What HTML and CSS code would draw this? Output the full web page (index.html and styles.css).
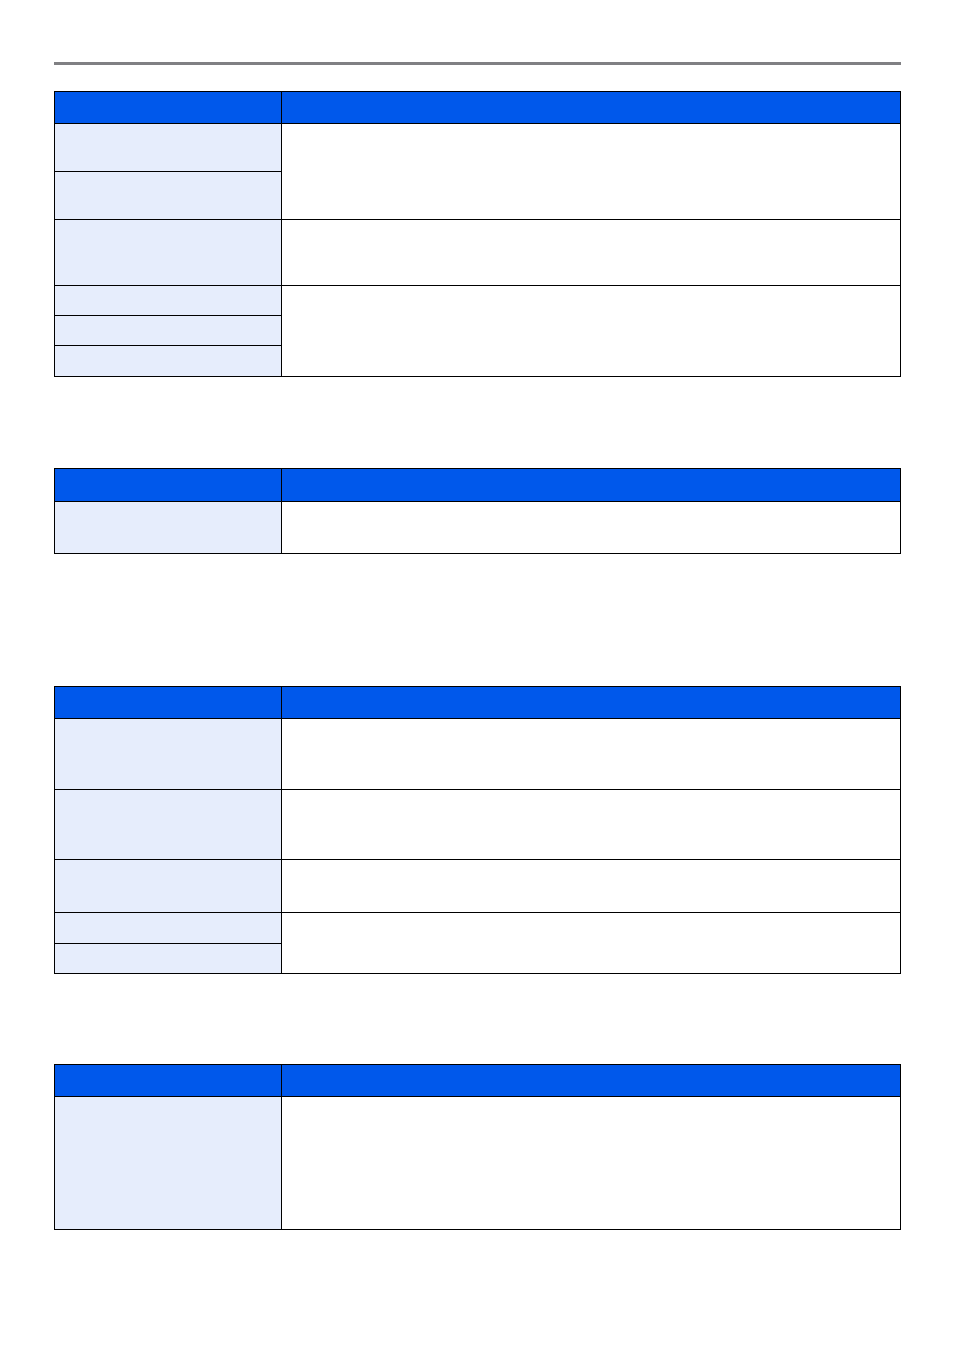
FILE: index.html
```html
<!DOCTYPE html>
<html lang="en">
<head>
<meta charset="utf-8">
<title>Tables</title>
<link rel="stylesheet" href="styles.css">
</head>
<body>
<div class="page">
  <div class="rule"></div>

  <div class="tbl t1">
    <div class="hd"></div><div class="hd"></div>
    <div class="k"></div><div class="v span2"></div>
    <div class="k"></div>
    <div class="k"></div><div class="v"></div>
    <div class="k"></div><div class="v span3"></div>
    <div class="k"></div>
    <div class="k"></div>
  </div>

  <div class="tbl t2">
    <div class="hd"></div><div class="hd"></div>
    <div class="k"></div><div class="v"></div>
  </div>

  <div class="tbl t3">
    <div class="hd"></div><div class="hd"></div>
    <div class="k"></div><div class="v"></div>
    <div class="k"></div><div class="v"></div>
    <div class="k"></div><div class="v"></div>
    <div class="k"></div><div class="v span2"></div>
    <div class="k"></div>
  </div>

  <div class="tbl t4">
    <div class="hd"></div><div class="hd"></div>
    <div class="k"></div><div class="v"></div>
  </div>
</div>
</body>
</html>
```

FILE: styles.css
```css
html, body {
  margin: 0;
  padding: 0;
  background: #ffffff;
  font-family: "Liberation Sans", Arial, sans-serif;
}
.page {
  width: 847px;
  padding: 62px 0 0 54px;
}
.rule {
  height: 3px;
  background: #808083;
}
.tbl {
  display: grid;
  grid-template-columns: 226px 618px;
  gap: 1px;
  padding: 1px;
  background: #000000;
  width: 845px;
}
.hd { background: #0058eb; }
.k { background: #e6edfc; }
.v { background: #ffffff; }
.span2 { grid-row: span 2; }
.span3 { grid-row: span 3; }

.t1 {
  margin-top: 26px;
  grid-template-rows: 31px 47px 47px 65px 29px 29px 30px;
}
.t2 {
  margin-top: 91px;
  grid-template-rows: 32px 51px;
}
.t3 {
  margin-top: 132px;
  grid-template-rows: 31px 70px 69px 52px 30px 29px;
}
.t4 {
  margin-top: 90px;
  grid-template-rows: 31px 132px;
}
```
